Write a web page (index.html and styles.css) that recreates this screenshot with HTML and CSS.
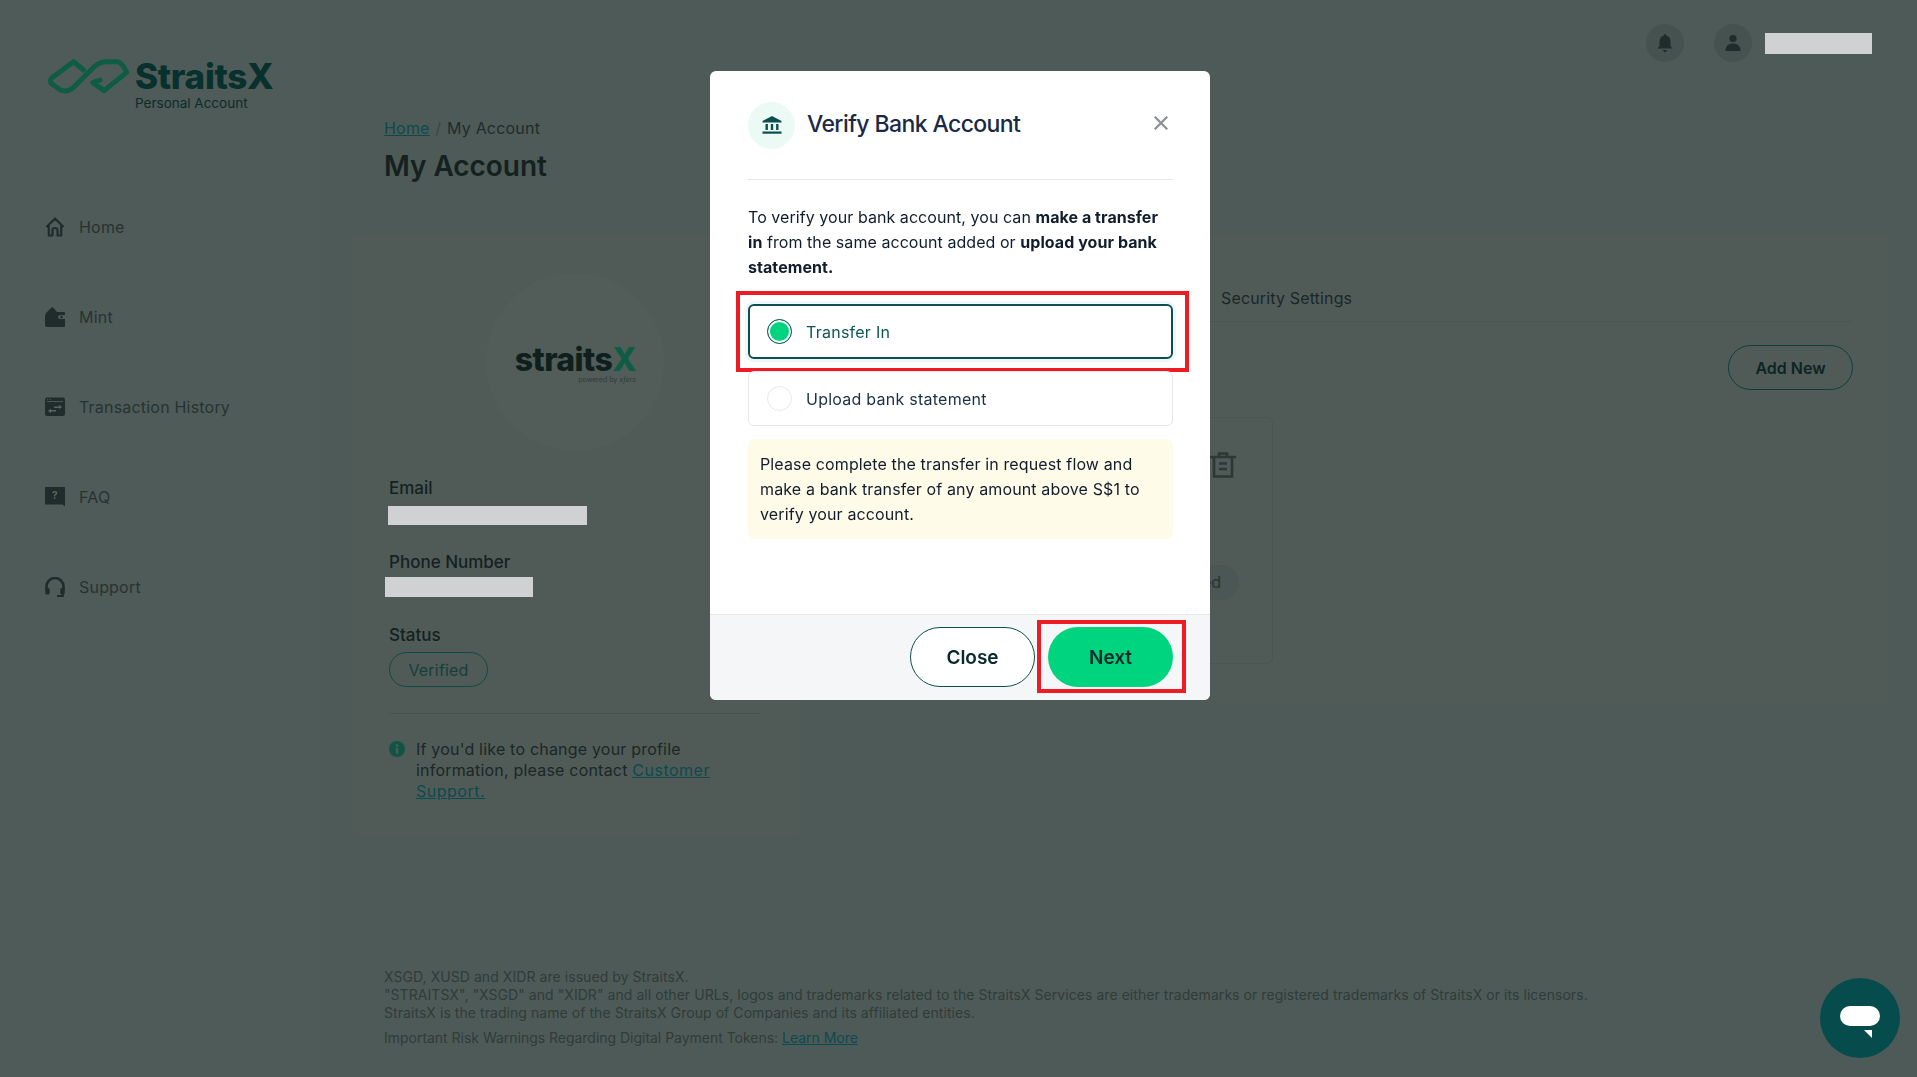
FILE: index.html
```html
<!DOCTYPE html>
<html lang="en">
<head>
    <meta charset="UTF-8">
    <title>My Account - StraitsX</title>
    <link rel="stylesheet" href="styles.css">
</head>
<body>
    <div class="app">
        <aside class="sidebar">
            <div class="logo">
                <svg class="logo-mark" viewBox="50 52 250 108" fill="none" stroke="#0f5c44" stroke-width="15" stroke-linejoin="round" stroke-linecap="round">
                    <path d="M160 88 L130 63 L64 112 Q56 122 66 131 L90 148 Q110 156 128 142 L192 78 Q208 63 232 63 L262 63 Q276 65 290 95 L222 150 L188 126 L210 118"/>
                </svg>
                <div class="logo-text">
                    <div class="logo-name">StraitsX</div>
                    <div class="logo-sub">Personal Account</div>
                </div>
            </div>
            <nav class="nav">
                <a class="nav-item">
                    <svg class="nav-icon" viewBox="0 0 20 20" fill="none" stroke="#1f2c2b" stroke-width="2.2" stroke-linejoin="round"><path d="M1.5 10 L10 1.5 L18.5 10 M3.8 8.5 V18.5 H7.5 V13 Q7.5 11 10 11 Q12.5 11 12.5 13 V18.5 H16.2 V8.5"/></svg>
                    <span>Home</span>
                </a>
                <a class="nav-item">
                    <svg class="nav-icon" viewBox="0 0 20 20" fill="#1f2c2b"><path d="M1 7 Q1 5.5 2 5 L6.5 0.5 Q7.5 0 8.5 1 L12 5 H19 Q20 5 20 6 V8 H15 Q13 8 13 10 Q13 12 15 12 H20 V19 Q20 20 19 20 H2 Q0 20 0 18 V8 Z"/><circle cx="16.5" cy="10" r="1.2"/></svg>
                    <span>Mint</span>
                </a>
                <a class="nav-item">
                    <svg class="nav-icon" viewBox="0 0 20 20"><rect width="20" height="18.5" y="0.5" rx="2" fill="#1f2c2b"/><path d="M2 4.6 H18" stroke="#4f5b58" stroke-width="1"/><path d="M2 2.6 H3.2 M4.6 2.6 H5.8" stroke="#4f5b58" stroke-width="1"/><path d="M9 9.5 H14 V7.8 L17 10.2 L14 12 V10.9 H9 Z M11 13 H6 V11.6 L3 14 L6 16.2 V14.6 H11 Z" fill="#59655f"/></svg>
                    <span>Transaction History</span>
                </a>
                <a class="nav-item">
                    <svg class="nav-icon" viewBox="0 0 20 20" fill="#1f2c2b"><path d="M0 0 H20 V19.5 L17.5 17.5 H0 Z"/><text x="10" y="12" font-size="10" font-weight="700" text-anchor="middle" fill="#59655f" font-family="Inter, sans-serif">?</text></svg>
                    <span>FAQ</span>
                </a>
                <a class="nav-item">
                    <svg class="nav-icon" viewBox="0 0 20 20" fill="none" stroke="#1f2c2b" stroke-width="2.6"><path d="M1.5 13 V9.5 A8.5 8.5 0 0 1 18.5 9.5 V13"/><rect x="0.3" y="11" width="4.4" height="6.5" rx="1.5" fill="#1f2c2b" stroke="none"/><rect x="15.3" y="11" width="4.4" height="6.5" rx="1.5" fill="#1f2c2b" stroke="none"/><path d="M18 16 V19 H12" stroke-width="1.8"/></svg>
                    <span>Support</span>
                </a>
            </nav>
        </aside>

        <main class="main">
            <header class="topbar">
                <span class="top-btn">
                    <svg viewBox="0 0 20 20" width="20" height="20" fill="#1f2c2b"><path d="M10 1 Q11 1 11 2.4 Q15.5 3.6 15.5 9 V13 L17.5 15.5 H2.5 L4.5 13 V9 Q4.5 3.6 9 2.4 Q9 1 10 1 Z M7.5 17 H12.5 L10 19.5 Z"/></svg>
                </span>
                <span class="top-btn">
                    <svg viewBox="0 0 20 20" width="20" height="20" fill="#1f2c2b"><circle cx="10" cy="5.5" r="3.6"/><path d="M2.5 18 Q2.5 10.5 10 10.5 Q17.5 10.5 17.5 18 Z"/></svg>
                </span>
                <span class="redacted redacted-user"></span>
            </header>

            <div class="crumbs"><a href="#">Home</a> <span class="sep">/</span> My Account</div>
            <h1 class="page-title">My Account</h1>

            <div class="cards">
                <section class="card profile">
                    <div class="avatar">
                        <div class="avatar-logo">straits<span>X</span></div>
                        <div class="avatar-sub">powered by <i>xfers</i></div>
                    </div>
                    <div class="field-label">Email</div>
                    <div class="redacted redacted-email"></div>
                    <div class="field-label label-phone">Phone Number</div>
                    <div class="redacted redacted-phone"></div>
                    <div class="field-label label-status">Status</div>
                    <span class="status-pill">Verified</span>
                    <div class="info">
                        <svg class="info-icon" viewBox="0 0 16 16"><circle cx="8" cy="8" r="8" fill="#115443"/><rect x="6.8" y="7" width="2.4" height="5.5" fill="#505c59"/><circle cx="8" cy="4.6" r="1.4" fill="#505c59"/></svg>
                        <p>If you'd like to change your profile<br>information, please contact <a href="#">Customer</a><br><a href="#">Support.</a></p>
                    </div>
                </section>

                <section class="card accounts">
                    <div class="tabs"><span>Security Settings</span></div>
                    <div class="accounts-actions"><button class="add-btn">Add New</button></div>
                    <div class="bank-card">
                        <div class="bank-top">
                            <svg class="trash" viewBox="0 0 26 26" fill="none" stroke="#2b3836" stroke-width="2.6"><path d="M0 5 H26 M9 5 V1.5 H17 V5 M4 5 V24.5 H22 V5"/><path d="M9 11.5 H17 M9 17 H17"/></svg>
                        </div>
                        <div class="bank-bottom"><span class="bank-status">Unverified</span></div>
                    </div>
                </section>
            </div>

            <footer class="legal">
                <p>XSGD, XUSD and XIDR are issued by StraitsX.<br>
                "STRAITSX", "XSGD" and "XIDR" and all other URLs, logos and trademarks related to the StraitsX Services are either trademarks or registered trademarks of StraitsX or its licensors.<br>
                StraitsX is the trading name of the StraitsX Group of Companies and its affiliated entities.</p>
                <p class="legal-risk">Important Risk Warnings Regarding Digital Payment Tokens: <a href="#">Learn More</a></p>
            </footer>
        </main>
    </div>

    <div class="modal">
        <div class="modal-body">
            <div class="modal-head">
                <span class="modal-icon">
                    <svg viewBox="0 0 20 20" width="20" height="20" fill="#0b4f4f"><path d="M10 1 L19.5 6 V7.5 H0.5 V6 Z"/><rect x="3.5" y="9" width="2.4" height="6"/><rect x="8.8" y="9" width="2.4" height="6"/><rect x="14.1" y="9" width="2.4" height="6"/><rect x="0.5" y="16.5" width="19" height="2.2"/></svg>
                </span>
                <h2 class="modal-title">Verify Bank Account</h2>
                <svg class="modal-close" viewBox="0 0 14 14" fill="none" stroke="#8a8f94" stroke-width="2.2"><path d="M0.7 0.7 L13.3 13.3 M13.3 0.7 L0.7 13.3"/></svg>
            </div>
            <p class="modal-text">To verify your bank account, you can <b>make a transfer</b><br><b>in</b> from the same account added or <b>upload your bank</b><br><b>statement.</b></p>
            <div class="option option-active">
                <span class="radio radio-on"></span>
                <span>Transfer In</span>
                <span class="mark mark-option"></span>
            </div>
            <div class="option">
                <span class="radio"></span>
                <span>Upload bank statement</span>
            </div>
            <div class="notice">Please complete the transfer in request flow and make a bank transfer of any amount above S$1 to verify your account.</div>
        </div>
        <div class="modal-foot">
            <button class="btn btn-close">Close</button>
            <button class="btn btn-next">Next<span class="mark mark-next"></span></button>
        </div>
    </div>

    <div class="chat">
        <svg viewBox="0 0 40 32" width="40" height="32"><rect width="40" height="20" rx="10" fill="#fff"/><path d="M24 24 H32 V32 Z" fill="#fff"/></svg>
    </div>
</body>
</html>
```

FILE: styles.css
```css
/* Page behind the dialog, already dimmed */
* {
    box-sizing: border-box;
}

body {
    margin: 0;
    height: 100vh;
    overflow: hidden;
    font-family: Inter, "Noto Sans", sans-serif;
    background-color: #4e5a57;
    color: #1f2c2b;
}

a {
    color: #0c4a4e;
    text-decoration: underline;
}

.app {
    display: flex;
    height: 100vh;
}

/* Sidebar */
.sidebar {
    width: 321px;
    flex-shrink: 0;
    background-color: #4f5b58;
}

.logo {
    display: flex;
    align-items: flex-start;
    gap: 5px;
    height: 182px;
    padding: 57px 0 0 47px;
}

.logo-mark {
    width: 83px;
    height: 38px;
}

.logo-name {
    font-size: 35px;
    line-height: 38px;
    font-weight: 800;
    letter-spacing: -0.3px;
    color: #08302c;
}

.logo-sub {
    font-size: 13.5px;
    line-height: 16px;
    color: #0c2b2b;
}

.nav-item {
    display: flex;
    align-items: center;
    gap: 14px;
    height: 90px;
    padding-left: 45px;
    font-size: 16px;
    letter-spacing: 0.2px;
    color: #263332;
    text-decoration: none;
}

.nav-icon {
    width: 20px;
    height: 20px;
}

/* Main column */
.main {
    flex: 1;
    display: flex;
    flex-direction: column;
    min-width: 0;
}

.topbar {
    display: flex;
    align-items: center;
    justify-content: flex-end;
    height: 86px;
    padding-right: 45px;
}

.top-btn {
    display: flex;
    align-items: center;
    justify-content: center;
    width: 38px;
    height: 38px;
    margin-right: 30px;
    border-radius: 50%;
    background-color: #465250;
}

.top-btn + .top-btn {
    margin-right: 13px;
}

.redacted {
    background-color: #d0d1d3;
}

.redacted-user {
    width: 107px;
    height: 21px;
}

.crumbs {
    margin: 32px 0 0 63px;
    font-size: 16px;
    line-height: 20px;
    letter-spacing: 0.2px;
    color: #1f2c2b;
}

.crumbs .sep {
    margin: 0 1px;
    color: #3a4745;
}

.page-title {
    margin: 10px 0 0 63px;
    font-size: 28px;
    line-height: 36px;
    font-weight: 600;
    letter-spacing: -0.05px;
    color: #14211f;
}

.cards {
    display: flex;
    align-items: flex-start;
    margin: 51px 28px 0 31px;
}

.card {
    background-color: #505b58;
    border-radius: 6px;
}

.profile {
    width: 448px;
    height: 601px;
    padding: 38px 39px 0 37px;
}

.avatar {
    display: flex;
    flex-direction: column;
    align-items: flex-end;
    justify-content: center;
    width: 178px;
    height: 178px;
    margin: 0 auto;
    padding: 4px 28px 0 0;
    border-radius: 50%;
    background-color: #525d5a;
}

.avatar-logo {
    font-size: 32px;
    line-height: 30px;
    font-weight: 800;
    letter-spacing: -0.6px;
    color: #0e1f1c;
}

.avatar-logo span {
    color: #0f5c44;
}

.avatar-sub {
    font-size: 7px;
    line-height: 9px;
    color: #2f3b39;
}

.field-label {
    margin-top: 26px;
    font-size: 17px;
    line-height: 22px;
    font-weight: 500;
    color: #14211f;
}

.label-status {
    margin-top: 27px;
}

.redacted-email {
    width: 199px;
    height: 19px;
    margin: 7px 0 0 -1px;
}

.redacted-phone {
    width: 148px;
    height: 20px;
    margin: 4px 0 0 -4px;
}

.status-pill {
    display: flex;
    align-items: center;
    justify-content: center;
    width: 99px;
    height: 35px;
    margin-top: 6px;
    border: 1px solid #0f4a42;
    border-radius: 18px;
    font-size: 16px;
    letter-spacing: 0.2px;
    color: #153f38;
}

.info {
    display: flex;
    gap: 11px;
    margin-top: 26px;
    padding-top: 25px;
    border-top: 1px solid #465250;
}

.info-icon {
    width: 16px;
    height: 16px;
    flex-shrink: 0;
    margin-top: 2px;
}

.info p {
    margin: 0;
    font-size: 16px;
    line-height: 21px;
    letter-spacing: 0.2px;
    white-space: nowrap;
    color: #1a2726;
}

.info a {
    letter-spacing: 0.5px;
}

.accounts {
    flex: 1;
    height: 468px;
    padding: 0 36px 0 50px;
}

.tabs {
    height: 87px;
    padding: 51px 0 0 371px;
    border-bottom: 1px solid #4a5653;
    font-size: 16px;
    line-height: 24px;
    letter-spacing: 0.15px;
    color: #1a2726;
}

.accounts-actions {
    display: flex;
    justify-content: flex-end;
    margin-top: 23px;
}

.add-btn {
    width: 125px;
    height: 45px;
    border: 1px solid #0f3f3c;
    border-radius: 23px;
    background: none;
    font-family: inherit;
    font-size: 16px;
    font-weight: 600;
    color: #0e2422;
}

.bank-card {
    display: flex;
    flex-direction: column;
    justify-content: space-between;
    width: 423px;
    height: 247px;
    margin-top: 27px;
    padding: 34px 33px 63px 0;
    border: 1px solid #4a5653;
    border-radius: 6px;
}

.bank-top {
    display: flex;
    justify-content: flex-end;
    padding-right: 3px;
}

.trash {
    width: 26px;
    height: 26px;
}

.bank-bottom {
    display: flex;
    justify-content: flex-end;
}

.bank-status {
    height: 35px;
    padding: 0 18px;
    border-radius: 18px;
    background-color: #4b5754;
    font-size: 16px;
    line-height: 35px;
    color: #263332;
}

.legal {
    margin: auto 0 0 63px;
    padding-bottom: 30px;
    font-size: 14px;
    line-height: 18px;
    letter-spacing: 0.06px;
    color: #2f3c3a;
}

.legal p {
    margin: 0;
}

.legal .legal-risk {
    margin-top: 7px;
    letter-spacing: -0.02px;
}

/* Dialog */
.modal {
    position: fixed;
    top: 71px;
    left: 710px;
    display: flex;
    flex-direction: column;
    width: 500px;
    height: 629px;
    border-radius: 6px;
    overflow: hidden;
    background-color: #fff;
    color: #111c2c;
}

.modal-body {
    flex: 1;
    padding: 0 37px 0 38px;
}

.modal-head {
    display: flex;
    align-items: center;
    gap: 12px;
    height: 109px;
    padding-top: 30px;
    padding-bottom: 30px;
    border-bottom: 1px solid #e5e7eb;
}

.modal-icon {
    display: flex;
    align-items: center;
    justify-content: center;
    width: 47px;
    height: 47px;
    border-radius: 50%;
    background-color: #ecfaf5;
}

.modal-title {
    flex: 1;
    margin: 0 0 2px;
    font-size: 23px;
    font-weight: 500;
    letter-spacing: -0.6px;
    color: #1b2a44;
}

.modal-close {
    width: 14px;
    height: 14px;
    margin: 0 5px 5px 0;
}

.modal-text {
    margin: 25px 0 24px;
    font-size: 16px;
    line-height: 25px;
    letter-spacing: 0.06px;
    white-space: nowrap;
}

.option {
    position: relative;
    display: flex;
    align-items: center;
    gap: 14px;
    height: 55px;
    margin-bottom: 12px;
    padding-left: 18px;
    border: 1px solid #e5e7eb;
    border-radius: 6px;
    font-size: 16px;
    letter-spacing: 0.25px;
    color: #1b2f45;
}

.option-active {
    border: 2px solid #0b4f4f;
    box-shadow: 0 0 0 3px #eef6fb;
    padding-left: 17px;
    color: #0f5555;
}

.radio {
    width: 25px;
    height: 25px;
    border: 1px solid #e5e7eb;
    border-radius: 50%;
}

.radio-on {
    border-color: #0b4f4f;
    background-color: #00d47e;
    box-shadow: inset 0 0 0 2px #fff;
}

.notice {
    height: 100px;
    margin-top: 13px;
    padding: 13px 12px;
    border-radius: 6px;
    background-color: #fefbe8;
    font-size: 16px;
    line-height: 25px;
    letter-spacing: 0.13px;
}

.modal-foot {
    display: flex;
    justify-content: flex-end;
    gap: 13px;
    height: 86px;
    padding: 12px 37px 13px;
    border-top: 1px solid #e5e7eb;
    background-color: #f5f6f8;
}

.btn {
    position: relative;
    width: 125px;
    height: 60px;
    border: 1px solid transparent;
    border-radius: 30px;
    font-family: inherit;
    font-size: 19px;
    font-weight: 600;
    color: #0a2a2e;
}

.btn-close {
    border-color: #0b4f4f;
    background-color: #fff;
}

.btn-next {
    background-color: #00d47e;
}

/* Red annotation boxes on top of the screenshot */
.mark {
    position: absolute;
    border: 4px solid #ed1c24;
}

.mark-option {
    top: -15px;
    left: -14px;
    right: -18px;
    bottom: -15px;
}

.mark-next {
    top: -8px;
    left: -12px;
    right: -14px;
    bottom: -7px;
}

.chat {
    position: fixed;
    right: 17px;
    bottom: 19px;
    display: flex;
    align-items: center;
    justify-content: center;
    width: 80px;
    height: 80px;
    padding-top: 8px;
    border-radius: 50%;
    background-color: #064c4c;
}
```
